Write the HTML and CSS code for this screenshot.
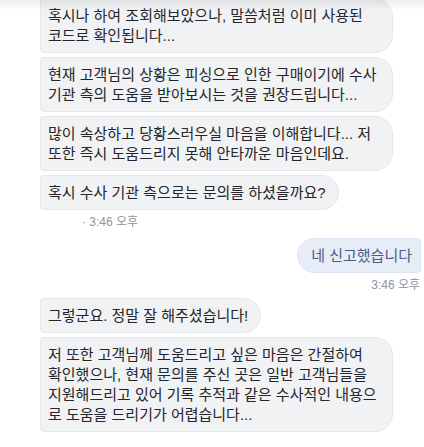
FILE: index.html
```html
<!DOCTYPE html>
<html lang="ko">
<head>
    <meta charset="UTF-8">
    <meta name="viewport" content="width=device-width, initial-scale=1.0">
    <title>Messages</title>
    <link rel="stylesheet" href="styles.css">
</head>
<body>
    <div class="top-shade"></div>
    <div class="chat">
        <!-- Their messages -->
        <div class="group group-in first">
            <div class="bubble wide">혹시나 하여 조회해보았으나, 말씀처럼 이미 사용된<br>코드로 확인됩니다...</div>
            <div class="bubble wide">현재 고객님의 상황은 피싱으로 인한 구매이기에 수사<br>기관 측의 도움을 받아보시는 것을 권장드립니다...</div>
            <div class="bubble wide">많이 속상하고 당황스러우실 마음을 이해합니다... 저<br>또한 즉시 도움드리지 못해 안타까운 마음인데요.</div>
            <div class="bubble">혹시 수사 기관 측으로는 문의를 하셨을까요?</div>
            <div class="time time-in">· 3:46 오후</div>
        </div>

        <!-- My message -->
        <div class="group group-out">
            <div class="bubble bubble-out">네 신고했습니다</div>
            <div class="time time-out">3:46 오후</div>
        </div>

        <!-- Their messages -->
        <div class="group group-in">
            <div class="bubble">그렇군요. 정말 잘 해주셨습니다!</div>
            <div class="bubble wide">저 또한 고객님께 도움드리고 싶은 마음은 간절하여<br>확인했으나, 현재 문의를 주신 곳은 일반 고객님들을<br>지원해드리고 있어 기록 추적과 같은 수사적인 내용으<br>로 도움을 드리기가 어렵습니다...</div>
        </div>
    </div>
</body>
</html>
```

FILE: styles.css
```css
body {
    margin: 0;
    padding: 0;
    background-color: #ffffff;
    font-family: "Liberation Sans", "Noto Sans CJK KR", sans-serif;
    color: #24262b;
    overflow: hidden;
}
.top-shade {
    position: fixed;
    top: 0;
    left: 0;
    right: 0;
    height: 10px;
    background: linear-gradient(rgba(0,0,0,0.07), rgba(0,0,0,0));
    pointer-events: none;
}
.chat {
    display: flex;
    flex-direction: column;
    padding: 0 3px 0 40px;
}
.group {
    display: flex;
    flex-direction: column;
    gap: 4px;
}
.group-in {
    align-items: flex-start;
}
.group-in.first {
    margin-top: -2px;
}
.group-out {
    align-items: flex-end;
    margin-top: 8px;
}
.group-out + .group-in {
    margin-top: 5px;
}
.bubble {
    box-sizing: border-box;
    max-width: 353px;
    padding: 7px 12px 6px 7px;
    font-size: 15px;
    line-height: 20px;
    background-color: #f1f2f4;
    border: 1px solid #e6e7ea;
    border-radius: 4px 18px 18px 4px;
    white-space: nowrap;
}
.bubble.wide {
    width: 353px;
}
/* Style for my own message */
.bubble-out {
    padding: 7px 8px 6px 13px;
    color: #4f5d7c;
    background-color: #e6edf9;
    border-color: #dde5f3;
    border-radius: 18px 4px 4px 18px;
}
.time {
    font-size: 12px;
    line-height: 16px;
    color: #8d949e;
}
.time-in {
    margin-left: 42px;
}
.time-out {
    margin-right: 1px;
}
```
